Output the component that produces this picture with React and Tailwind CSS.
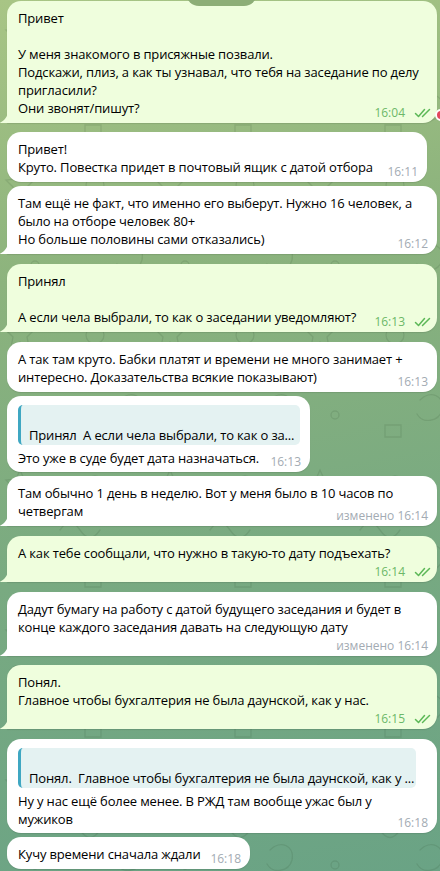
import React from 'react';

const messages = [
  { out: true, tail: true, mt: 'mt-[1px]', w: 'w-[430px]', time: '16:04',
    lines: ['Привет', '\u00a0', 'У меня знакомого в присяжные позвали.', 'Подскажи, плиз, а как ты узнавал, что тебя на заседание по делу', 'пригласили?', 'Они звонят/пишут?'] },
  { mt: 'mt-[9px]', w: 'w-[420px]', time: '16:11',
    lines: ['Привет!', 'Круто. Повестка придет в почтовый ящик с датой отбора'] },
  { tail: true, mt: 'mt-[4px]', w: 'w-[430px]', time: '16:12',
    lines: ['Там ещё не факт, что именно его выберут. Нужно 16 человек, а', 'было на отборе человек 80+', 'Но больше половины сами отказались)'] },
  { out: true, tail: true, mt: 'mt-[10px]', w: 'w-[430px]', time: '16:13',
    lines: ['Принял', '\u00a0', 'А если чела выбрали, то как о заседании уведомляют?'] },
  { mt: 'mt-[10px]', w: 'w-[430px]', time: '16:13',
    lines: ['А так там круто. Бабки платят и времени не много занимает +', 'интересно. Доказательства всякие показывают)'] },
  { mt: 'mt-[4px]', w: 'w-[303px]', time: '16:13', quote: 'Принял  А если чела выбрали, то как о за...', quoteW: 'w-[282px]',
    lines: ['Это уже в суде будет дата назначаться.'] },
  { tail: true, mt: 'mt-[4px]', w: 'w-[430px]', time: 'изменено 16:14',
    lines: ['Там обычно 1 день в неделю. Вот у меня было в 10 часов по', 'четвергам'] },
  { out: true, tail: true, mt: 'mt-[10px]', w: 'w-[430px]', time: '16:14', timeRow: true,
    lines: ['А как тебе сообщали, что нужно в такую-то дату подъехать?'] },
  { tail: true, mt: 'mt-[10px]', w: 'w-[430px]', time: 'изменено 16:14', timeRow: true,
    lines: ['Дадут бумагу на работу с датой будущего заседания и будет в', 'конце каждого заседания давать на следующую дату'] },
  { out: true, tail: true, mt: 'mt-[9px]', w: 'w-[430px]', time: '16:15', timeRow: true,
    lines: ['Понял.', 'Главное чтобы бухгалтерия не была даунской, как у нас.'] },
  { mt: 'mt-[10px]', w: 'w-[430px]', time: '16:18', quote: 'Понял.  Главное чтобы бухгалтерия не была даунской, как у ...', quoteW: 'w-[398px]',
    lines: ['Ну у нас ещё более менее. В РЖД там вообще ужас был у', 'мужиков'] },
  { mt: 'mt-[4px]', w: 'w-[243px]', time: '16:18',
    lines: ['Кучу времени сначала ждали'] },
];

function Checks() {
  return (
    <svg width="17" height="10" viewBox="0 0 17 10" className="ml-[9px]">
      <path d="M1.5 5.5 L4.5 8.5 L10.5 1.5" fill="none" stroke="#5cb857" strokeWidth="1.5" strokeLinecap="round" strokeLinejoin="round" />
      <path d="M8.5 8.5 L15.5 1.5" fill="none" stroke="#5cb857" strokeWidth="1.5" strokeLinecap="round" />
    </svg>
  );
}

function Tail({ color }) {
  return (
    <svg width="9" height="13" viewBox="0 0 9 13" className="absolute left-[-8px] bottom-0">
      <path d="M9 0 C9 7 5 11.5 0 13 L9 13 Z" fill={color} />
    </svg>
  );
}

function Bubble({ m }) {
  const bg = m.out ? 'bg-[#effedd]' : 'bg-white';
  const corners = m.tail ? 'rounded-tl-[14px] rounded-tr-[14px] rounded-br-[14px]' : 'rounded-[14px]';
  const pad = m.quote ? 'pt-[9px] pb-[5px]' : 'pt-[8px] pb-[6px]';
  return (
    <div className={`relative ${m.mt} ${m.w} ${bg} ${corners} ${pad} px-[11px] shadow-[0_1px_1px_rgba(0,0,0,0.1)]`}>
      {m.quote && (
        <div className={`${m.quoteW} h-[40px] mb-[4px] flex items-end rounded-[5px] border-l-[3px] border-[#3fa7c2] bg-[#e4f2f2] pl-[8px] pb-[1px]`}>
          <span className="whitespace-pre text-[13px] leading-[18px] tracking-[-0.15px] text-black">{m.quote}</span>
        </div>
      )}
      {m.lines.map((l, i) => (
        <div key={i} className="whitespace-pre text-[13px] leading-[18px] tracking-[-0.15px] text-black">{l}</div>
      ))}
      {m.timeRow && <div className="h-[14px]" />}
      <div className={`absolute bottom-[3px] flex items-center text-[12px] leading-[14px] ${m.out ? 'right-[6px] text-[#6cb868]' : 'right-[9px] text-[#a3abb3]'}`}>
        <span>{m.time}</span>
        {m.out && <Checks />}
      </div>
      {m.tail && <Tail color={m.out ? '#effedd' : '#ffffff'} />}
    </div>
  );
}

function Doodles() {
  return (
    <svg className="absolute inset-0" width="440" height="871">
      <defs>
        <pattern id="dd" width="150" height="150" patternUnits="userSpaceOnUse">
          <g fill="none" stroke="rgba(40,70,40,0.13)" strokeWidth="1.4" strokeLinecap="round">
            <path d="M20 20 l4 9 10 1 -7 7 2 10 -9 -5 -9 5 2 -10 -7 -7 10 -1 Z" />
            <circle cx="95" cy="35" r="9" />
            <path d="M60 80 q10 -15 20 0 t20 0" />
            <path d="M120 100 c10 -10 25 -5 22 10 c-3 12 -20 14 -25 4" />
            <circle cx="35" cy="115" r="4" />
            <path d="M85 125 h16 v12 h-16 z" />
            <path d="M10 70 c5 -6 12 -6 16 0" />
          </g>
        </pattern>
      </defs>
      <rect width="440" height="871" fill="url(#dd)" />
    </svg>
  );
}

export default function App() {
  return (
    <div className="relative w-[440px] h-[871px] overflow-hidden bg-[linear-gradient(170deg,#a8c585_0%,#8cb37d_30%,#79aa81_62%,#6aa385_100%)] font-['Open_Sans','Noto_Sans',sans-serif]">
      <Doodles />
      <div className="relative flex flex-col items-start pl-[7px]">
        {messages.map((m, i) => (
          <Bubble key={i} m={m} />
        ))}
      </div>
      <div className="absolute left-[186px] top-[-20px] w-[71px] h-[26px] rounded-full bg-[#8dae77]" />
      <div className="absolute left-[435px] top-[109px] w-[12px] h-[12px] rounded-full bg-[#e2475d] border-2 border-white" />
    </div>
  );
}
